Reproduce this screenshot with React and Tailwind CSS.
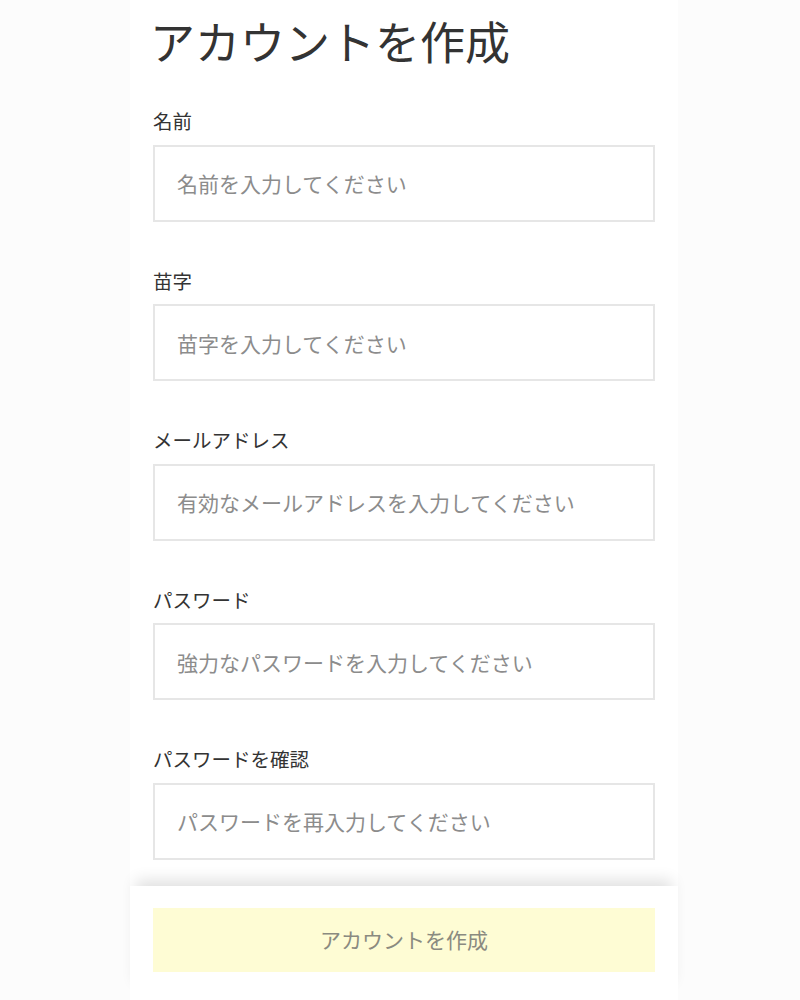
import React from "react";

const fields = [
  { label: "名前", placeholder: "名前を入力してください", type: "text" },
  { label: "苗字", placeholder: "苗字を入力してください", type: "text" },
  { label: "メールアドレス", placeholder: "有効なメールアドレスを入力してください", type: "email" },
  { label: "パスワード", placeholder: "強力なパスワードを入力してください", type: "password" },
  { label: "パスワードを確認", placeholder: "パスワードを再入力してください", type: "password" },
];

const Field = ({ label, placeholder, type }) => (
  <div className="flex flex-col gap-[14px]">
    <label className="text-[19.5px] leading-none text-[#333]">{label}</label>
    <input
      type={type}
      placeholder={placeholder}
      className="h-[77px] w-full border-2 border-[#e6e6e6] bg-white px-[22px] text-[21px] text-[#333] outline-none placeholder:text-[#8c8c8c]"
    />
  </div>
);

const App = () => {
  return (
    <div
      className="relative h-screen w-full overflow-hidden bg-[#fcfcfc]"
      style={{ fontFamily: '"Noto Sans CJK JP", "Noto Sans", sans-serif' }}
    >
      <div className="ml-[130px] flex h-full w-[548px] flex-col bg-white px-[23px] pt-[18px]">
        <h1 className="-ml-[3px] text-[45px] font-normal leading-none text-[#333]">アカウントを作成</h1>
        <form className="mt-[48px] flex flex-col gap-[49px]">
          {fields.map((f) => (
            <Field key={f.label} {...f} />
          ))}
        </form>
      </div>
      <div className="fixed bottom-0 left-[130px] w-[548px] bg-white px-[23px] pb-[28px] pt-[22px] shadow-[0_-12px_14px_-6px_rgba(0,0,0,0.12)]">
        <button className="flex h-[64px] w-full items-center justify-center bg-[#fefcd4] text-[21px] text-[#8a8a80]">
          アカウントを作成
        </button>
      </div>
    </div>
  );
};

export default App;
